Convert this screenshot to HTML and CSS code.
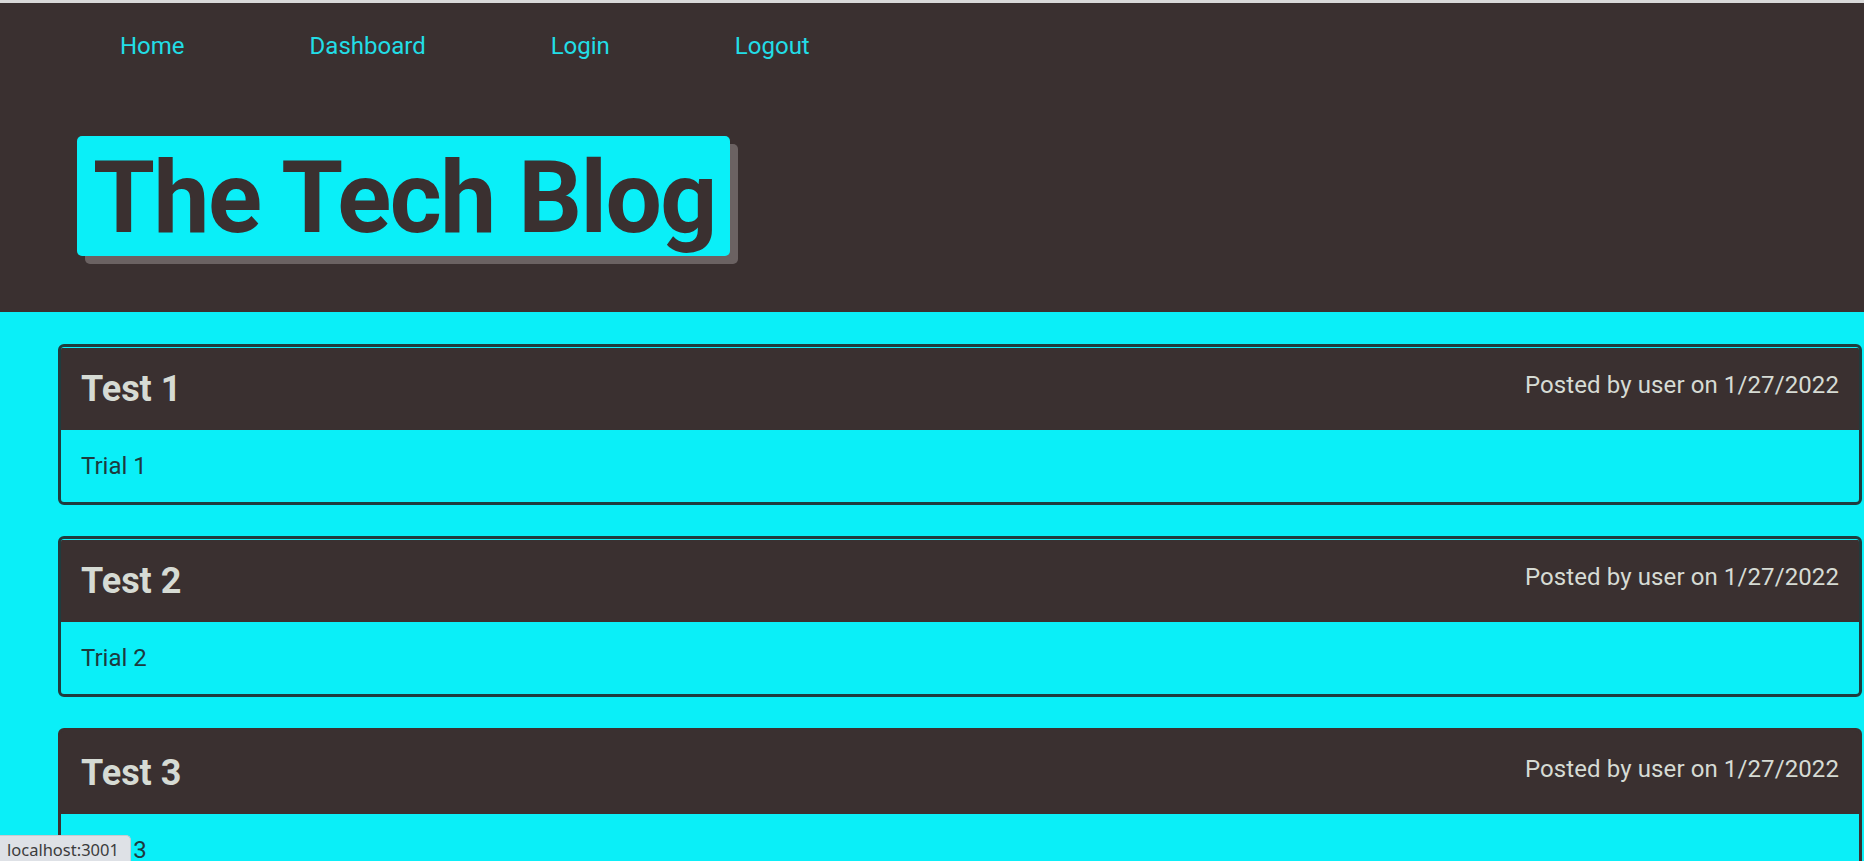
FILE: index.html
```html
<!DOCTYPE html>
<html lang="en">
<head>
<meta charset="utf-8">
<title>The Tech Blog</title>
<link rel="stylesheet" href="styles.css">
</head>
<body>
<header class="site-header">
  <nav class="nav">
    <a class="nav-link" href="#">Home</a>
    <a class="nav-link" href="#">Dashboard</a>
    <a class="nav-link" href="#">Login</a>
    <a class="nav-link" href="#">Logout</a>
  </nav>
  <h1 class="site-title">The Tech Blog</h1>
</header>
<main class="posts">
  <article class="post">
    <div class="post-head">
      <h2 class="post-title">Test 1</h2>
      <p class="post-meta">Posted by user on 1/27/2022</p>
    </div>
    <div class="post-body">Trial 1</div>
  </article>
  <article class="post">
    <div class="post-head">
      <h2 class="post-title">Test 2</h2>
      <p class="post-meta">Posted by user on 1/27/2022</p>
    </div>
    <div class="post-body">Trial 2</div>
  </article>
  <article class="post post-hover">
    <div class="post-head">
      <h2 class="post-title">Test 3</h2>
      <p class="post-meta">Posted by user on 1/27/2022</p>
    </div>
    <div class="post-body">Trial 3</div>
  </article>
</main>
<div class="status-bar">localhost:3001</div>
</body>
</html>
```

FILE: styles.css
```css
html, body {
  margin: 0;
  padding: 0;
}
body {
  background: #0aeff8;
  font-family: Roboto, "Noto Sans", sans-serif;
  font-size: 24px;
  color: #1d3a3e;
  overflow: hidden;
  height: 861px;
}
.site-header {
  background: #3a3030;
  border-top: 3px solid #d9d9d9;
  height: 309px;
  box-sizing: content-box;
  display: flex;
  flex-direction: column;
  align-items: flex-start;
}
.nav {
  display: flex;
  gap: 125px;
  padding: 25px 0 0 120px;
}
.nav-link {
  color: #22dde6;
  text-decoration: none;
  font-size: 24px;
  line-height: 36px;
}
.site-title {
  margin: 72px 0 0 77px;
  background: #0aeff8;
  color: #3a3030;
  font-size: 100px;
  font-weight: 700;
  line-height: 100px;
  padding: 12px 14px 8px 16px;
  border-radius: 5px;
  box-shadow: 8px 8px 0 #6b6262;
  letter-spacing: -1.5px;
}
.posts {
  display: flex;
  flex-direction: column;
  gap: 31px;
  padding: 32px 2px 0 58px;
}
.post {
  border: 3px solid #1f3c3e;
  border-radius: 6px;
  padding-top: 1px;
  background: #0aeff8;
  overflow: hidden;
}
.post-hover {
  border-color: #3a3030;
  background: #3a3030;
}
.post-hover .post-body {
  background: #0aeff8;
}
.post-head {
  background: #3a3030;
  height: 82px;
  display: flex;
  justify-content: space-between;
  align-items: center;
  padding: 0 20px 0 20px;
}
.post-title {
  margin: 0;
  font-size: 36px;
  font-weight: 700;
  color: #d6dbd4;
}
.post-meta {
  margin: 0 0 8px 0;
  font-size: 24px;
  letter-spacing: 0.1px;
  color: #d6dbd4;
}
.post-body {
  padding: 18px 20px;
  line-height: 36px;
  color: #1d3a3e;
}
.status-bar {
  position: fixed;
  left: 0;
  bottom: 0;
  height: 25px;
  padding: 0 11px 0 7px;
  background: #dee1e6;
  border: 1px solid #c8cbd0;
  border-left: none;
  border-bottom: none;
  border-top-right-radius: 5px;
  font-family: "Noto Sans", "Open Sans", sans-serif;
  font-size: 16.5px;
  line-height: 28px;
  color: #3c3c3c;
}
```
